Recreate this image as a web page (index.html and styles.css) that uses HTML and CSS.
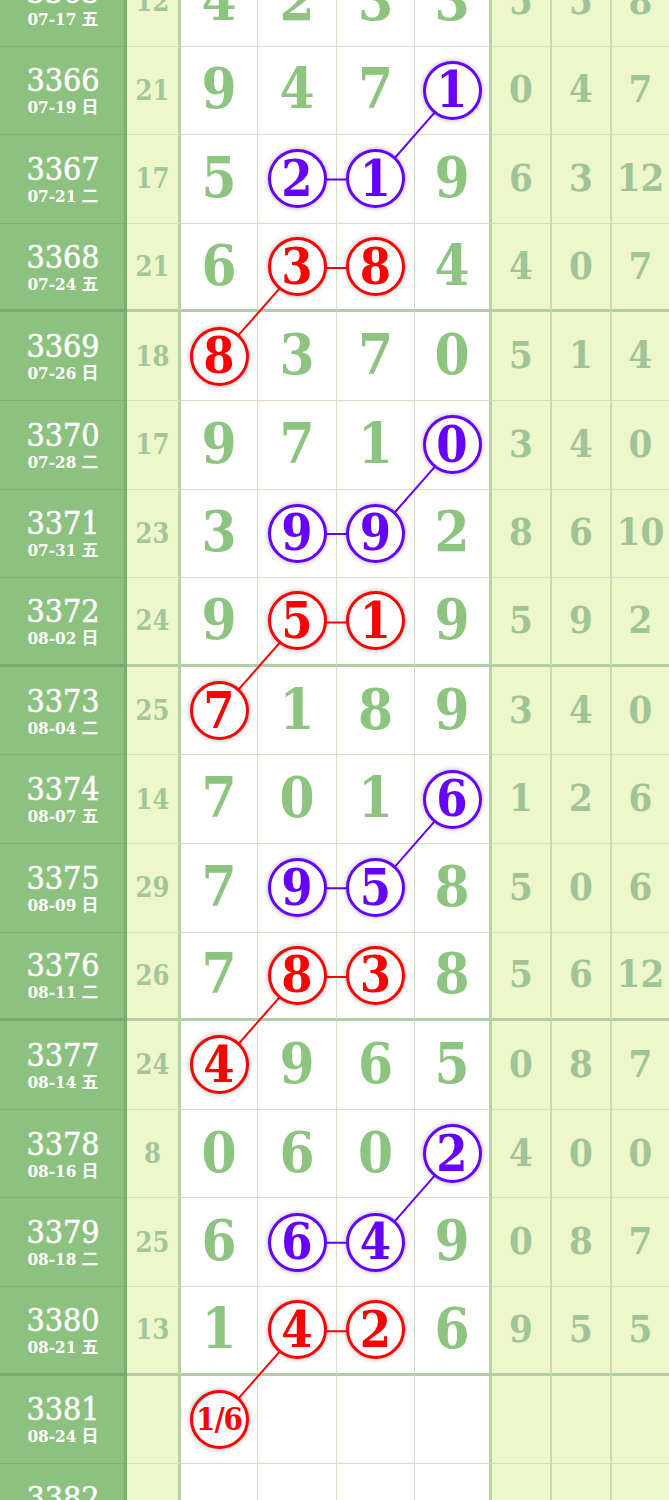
FILE: index.html
```html
<!DOCTYPE html>
<html>
<head>
<meta charset="utf-8">
<link rel="stylesheet" href="styles.css">
</head>
<body>
<div class="chart">
  <svg class="links" width="669" height="1600" viewBox="0 0 669 1600">
    <g stroke="#6600ff" stroke-width="2" fill="none">
      <line x1="453.5" y1="132.9" x2="376" y2="221.5"/><line x1="376" y1="221.5" x2="297.5" y2="221.5"/>
      <line x1="453.5" y1="487.3" x2="376" y2="575.9"/><line x1="376" y1="575.9" x2="297.5" y2="575.9"/>
      <line x1="453.5" y1="841.7" x2="376" y2="930.3"/><line x1="376" y1="930.3" x2="297.5" y2="930.3"/>
      <line x1="453.5" y1="1196.1" x2="376" y2="1284.7"/><line x1="376" y1="1284.7" x2="297.5" y2="1284.7"/>
    </g>
    <g stroke="#ff0000" stroke-width="2" fill="none">
      <line x1="297.5" y1="310.1" x2="376" y2="310.1"/><line x1="297.5" y1="310.1" x2="219.5" y2="398.7"/>
      <line x1="297.5" y1="664.5" x2="376" y2="664.5"/><line x1="297.5" y1="664.5" x2="219.5" y2="753.1"/>
      <line x1="297.5" y1="1018.9" x2="376" y2="1018.9"/><line x1="297.5" y1="1018.9" x2="219.5" y2="1107.5"/>
      <line x1="297.5" y1="1373.3" x2="376" y2="1373.3"/><line x1="297.5" y1="1373.3" x2="219.5" y2="1461.9"/>
    </g>
  </svg>

  <div class="row"><div class="c date"><span class="no">3365</span><span class="dt">07-17 五</span></div><div class="c sum">12</div><div class="c m">4</div><div class="c m">2</div><div class="c m">3</div><div class="c m last">3</div><div class="c r">5</div><div class="c r">5</div><div class="c r">8</div></div>
  <div class="row"><div class="c date"><span class="no">3366</span><span class="dt">07-19 日</span></div><div class="c sum">21</div><div class="c m">9</div><div class="c m">4</div><div class="c m">7</div><div class="c m last"><span class="ball b">1</span></div><div class="c r">0</div><div class="c r">4</div><div class="c r">7</div></div>
  <div class="row"><div class="c date"><span class="no">3367</span><span class="dt">07-21 二</span></div><div class="c sum">17</div><div class="c m">5</div><div class="c m"><span class="ball b">2</span></div><div class="c m"><span class="ball b">1</span></div><div class="c m last">9</div><div class="c r">6</div><div class="c r">3</div><div class="c r">12</div></div>
  <div class="row thick"><div class="c date"><span class="no">3368</span><span class="dt">07-24 五</span></div><div class="c sum">21</div><div class="c m">6</div><div class="c m"><span class="ball red">3</span></div><div class="c m"><span class="ball red">8</span></div><div class="c m last">4</div><div class="c r">4</div><div class="c r">0</div><div class="c r">7</div></div>
  <div class="row"><div class="c date"><span class="no">3369</span><span class="dt">07-26 日</span></div><div class="c sum">18</div><div class="c m"><span class="ball red">8</span></div><div class="c m">3</div><div class="c m">7</div><div class="c m last">0</div><div class="c r">5</div><div class="c r">1</div><div class="c r">4</div></div>
  <div class="row"><div class="c date"><span class="no">3370</span><span class="dt">07-28 二</span></div><div class="c sum">17</div><div class="c m">9</div><div class="c m">7</div><div class="c m">1</div><div class="c m last"><span class="ball b">0</span></div><div class="c r">3</div><div class="c r">4</div><div class="c r">0</div></div>
  <div class="row"><div class="c date"><span class="no">3371</span><span class="dt">07-31 五</span></div><div class="c sum">23</div><div class="c m">3</div><div class="c m"><span class="ball b">9</span></div><div class="c m"><span class="ball b">9</span></div><div class="c m last">2</div><div class="c r">8</div><div class="c r">6</div><div class="c r">10</div></div>
  <div class="row thick"><div class="c date"><span class="no">3372</span><span class="dt">08-02 日</span></div><div class="c sum">24</div><div class="c m">9</div><div class="c m"><span class="ball red">5</span></div><div class="c m"><span class="ball red">1</span></div><div class="c m last">9</div><div class="c r">5</div><div class="c r">9</div><div class="c r">2</div></div>
  <div class="row"><div class="c date"><span class="no">3373</span><span class="dt">08-04 二</span></div><div class="c sum">25</div><div class="c m"><span class="ball red">7</span></div><div class="c m">1</div><div class="c m">8</div><div class="c m last">9</div><div class="c r">3</div><div class="c r">4</div><div class="c r">0</div></div>
  <div class="row"><div class="c date"><span class="no">3374</span><span class="dt">08-07 五</span></div><div class="c sum">14</div><div class="c m">7</div><div class="c m">0</div><div class="c m">1</div><div class="c m last"><span class="ball b">6</span></div><div class="c r">1</div><div class="c r">2</div><div class="c r">6</div></div>
  <div class="row"><div class="c date"><span class="no">3375</span><span class="dt">08-09 日</span></div><div class="c sum">29</div><div class="c m">7</div><div class="c m"><span class="ball b">9</span></div><div class="c m"><span class="ball b">5</span></div><div class="c m last">8</div><div class="c r">5</div><div class="c r">0</div><div class="c r">6</div></div>
  <div class="row thick"><div class="c date"><span class="no">3376</span><span class="dt">08-11 二</span></div><div class="c sum">26</div><div class="c m">7</div><div class="c m"><span class="ball red">8</span></div><div class="c m"><span class="ball red">3</span></div><div class="c m last">8</div><div class="c r">5</div><div class="c r">6</div><div class="c r">12</div></div>
  <div class="row"><div class="c date"><span class="no">3377</span><span class="dt">08-14 五</span></div><div class="c sum">24</div><div class="c m"><span class="ball red">4</span></div><div class="c m">9</div><div class="c m">6</div><div class="c m last">5</div><div class="c r">0</div><div class="c r">8</div><div class="c r">7</div></div>
  <div class="row"><div class="c date"><span class="no">3378</span><span class="dt">08-16 日</span></div><div class="c sum">8</div><div class="c m">0</div><div class="c m">6</div><div class="c m">0</div><div class="c m last"><span class="ball b">2</span></div><div class="c r">4</div><div class="c r">0</div><div class="c r">0</div></div>
  <div class="row"><div class="c date"><span class="no">3379</span><span class="dt">08-18 二</span></div><div class="c sum">25</div><div class="c m">6</div><div class="c m"><span class="ball b">6</span></div><div class="c m"><span class="ball b">4</span></div><div class="c m last">9</div><div class="c r">0</div><div class="c r">8</div><div class="c r">7</div></div>
  <div class="row thick"><div class="c date"><span class="no">3380</span><span class="dt">08-21 五</span></div><div class="c sum">13</div><div class="c m">1</div><div class="c m"><span class="ball red">4</span></div><div class="c m"><span class="ball red">2</span></div><div class="c m last">6</div><div class="c r">9</div><div class="c r">5</div><div class="c r">5</div></div>
  <div class="row"><div class="c date"><span class="no">3381</span><span class="dt">08-24 日</span></div><div class="c sum"></div><div class="c m"><span class="ball red small">1/6</span></div><div class="c m"></div><div class="c m"></div><div class="c m last"></div><div class="c r"></div><div class="c r"></div><div class="c r"></div></div>
  <div class="row"><div class="c date"><span class="no">3382</span><span class="dt">08-26 二</span></div><div class="c sum"></div><div class="c m"></div><div class="c m"></div><div class="c m"></div><div class="c m last"></div><div class="c r"></div><div class="c r"></div><div class="c r"></div></div>
</div>
</body>
</html>
```
FILE: styles.css
```css
html, body {
  margin: 0;
  padding: 0;
  background: #ffffff;
}
body {
  width: 669px;
  height: 1500px;
  overflow: hidden;
  font-family: "DejaVu Serif Condensed", "DejaVu Serif", "Noto Sans CJK SC", serif;
  font-stretch: condensed;
}
.chart {
  position: relative;
  margin-top: -42px;
  width: 669px;
}
.links {
  position: absolute;
  top: 0;
  left: 0;
  z-index: 1;
}
.row {
  display: grid;
  grid-template-columns: 127px 54px 77px 79px 78px 77px 60px 60px 57px;
  height: 88.6px;
}
.c {
  box-sizing: border-box;
  display: flex;
  align-items: center;
  justify-content: center;
  border-right: 1px solid #cfe2c6;
  border-bottom: 1px solid #cfe2c6;
  font-weight: bold;
  line-height: 1;
}
.date {
  background: #8dc180;
  border-right: 3px solid #7cae6e;
  border-bottom-color: #7fb171;
  flex-direction: column;
  color: #ffffff;
  gap: 3px;
  padding-left: 2px;
}
.no {
  font-size: 32px;
  font-weight: normal;
  -webkit-text-stroke: 0.5px #ffffff;
}
.dt {
  font-size: 17px;
  font-weight: bold;
  font-family: "DejaVu Serif Condensed", "DejaVu Serif", "Noto Sans CJK SC", serif;
}
.sum {
  background: #eef7ca;
  border-right: 3px solid #b7d2a9;
  color: #a3c59b;
  font-size: 27px;
}
.m {
  background: #ffffff;
  color: #8dc47f;
  font-size: 56px;
  padding-bottom: 4px;
}
.m.last {
  border-right: 3px solid #b7d2a9;
}
.r {
  background: #eef7ca;
  border-right: 2px solid #c6dcb5;
  color: #a0c497;
  font-size: 38px;
  padding-bottom: 2px;
}
.r:last-child {
  border-right: 0;
}
.row.thick .c {
  border-bottom: 3px solid #b3cea6;
}
.row.thick .date {
  border-bottom-color: #79a96b;
}
.ball {
  position: relative;
  z-index: 2;
  box-sizing: border-box;
  width: 59px;
  height: 59px;
  border-radius: 50%;
  border: 3px solid currentColor;
  background: #ffffff;
  display: flex;
  align-items: center;
  justify-content: center;
  font-size: 50px;
  box-shadow: 0 0 5px rgba(0, 0, 0, 0.35);
  margin-top: 4px;
}
.ball.b {
  color: #6600ff;
}
.ball.red {
  color: #ff0000;
}
.ball.small {
  font-size: 31px;
  letter-spacing: -1px;
}
```
